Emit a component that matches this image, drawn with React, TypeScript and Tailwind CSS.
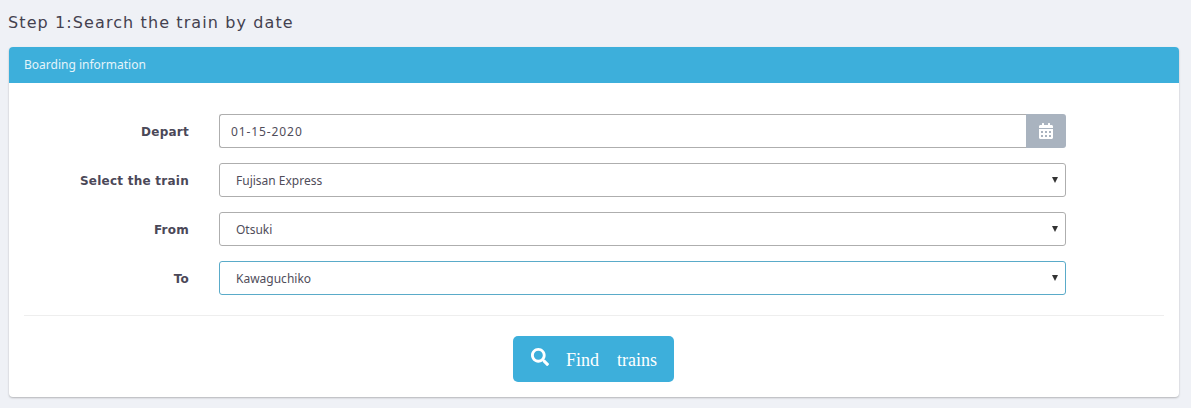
import React from 'react';
import { FaCalendarAlt, FaSearch } from 'react-icons/fa';

const inputText = "h-[34px] w-full rounded-[3px] border bg-white pt-px text-[12px] text-[#504d5a] outline-none font-['Noto_Sans',sans-serif]";

const Row = ({ label, children }: { label: string; children: React.ReactNode }) => (
  <div className="flex h-[34px] items-center">
    <label className="w-[165px] pt-[2px] text-right text-[12px] font-bold tracking-[0.25px] text-[#4b4858] font-['DejaVu_Sans',sans-serif]">
      {label}
    </label>
    <div className="ml-[30px] w-[847px]">{children}</div>
  </div>
);

const Select = ({ value, focused }: { value: string; focused?: boolean }) => (
  <div className="relative">
    <select
      defaultValue={value}
      className={`${inputText} appearance-none pl-4 ${focused ? 'border-[#5aabc9]' : 'border-[#aeaeae]'}`}
    >
      <option>{value}</option>
    </select>
    <span className="absolute right-[8px] top-[14px] h-0 w-0 border-x-[3px] border-t-[6px] border-x-transparent border-t-[#333]" />
  </div>
);

const App = () => {
  return (
    <div className="h-[408px] overflow-hidden bg-[#eff1f6] px-[9px]">
      <h2 className="-ml-px pt-[13px] text-[16px] leading-[20px] tracking-[1.1px] text-[#44414f] font-['DejaVu_Sans',sans-serif]">
        Step 1:Search the train by date
      </h2>
      <div className="mt-[14px] w-[1170px] overflow-hidden rounded-[4px] bg-white shadow-[0_1px_2px_rgba(0,0,0,0.25)]">
        <div className="flex h-[36px] items-center bg-[#3dafdb] px-[15px] text-[12px] text-[#e4f4fa] font-['Noto_Sans',sans-serif]">
          Boarding information
        </div>
        <div className="px-[15px] pt-[31px]">
          <div className="flex flex-col gap-[15px]">
            <Row label="Depart">
              <div className="flex">
                <input
                  defaultValue="01-15-2020"
                  className={`${inputText} rounded-r-none border-[#aeaeae] border-r-0 pl-[11px] tracking-[0.9px]`}
                />
                <button className="flex h-[34px] w-[40px] shrink-0 items-center justify-center rounded-r-[3px] bg-[#a9b3bf] pr-px text-[16px] text-white">
                  <FaCalendarAlt />
                </button>
              </div>
            </Row>
            <Row label="Select the train">
              <Select value="Fujisan Express" />
            </Row>
            <Row label="From">
              <Select value="Otsuki" />
            </Row>
            <Row label="To">
              <Select value="Kawaguchiko" focused />
            </Row>
          </div>
          <hr className="mt-[20px] border-t border-[#eeeeee]" />
          <div className="flex justify-center pt-[20px] pb-[15px] pr-px">
            <button className="flex h-[46px] w-[161px] items-center rounded-[5px] bg-[#3dafdb] pl-[18px] text-[18px] text-white font-['Liberation_Serif',serif]">
              <FaSearch className="mb-[5px] text-[18px]" />
              <span className="ml-[17px] mt-[2px]">Find</span>
              <span className="ml-[18px] mt-[2px]">trains</span>
            </button>
          </div>
        </div>
      </div>
    </div>
  );
};

export default App;
